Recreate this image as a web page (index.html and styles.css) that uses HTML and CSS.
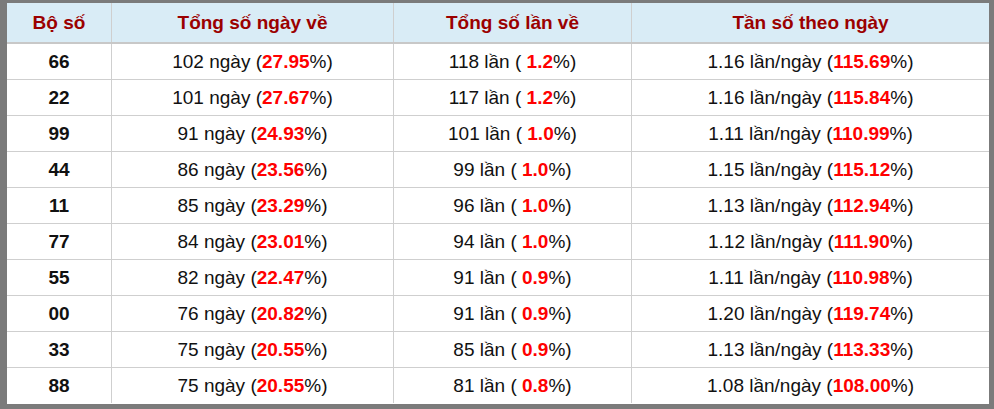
FILE: index.html
```html
<!DOCTYPE html>
<html lang="vi">
<head>
<meta charset="utf-8">
<link rel="stylesheet" href="styles.css">
</head>
<body>
<div class="frame">
<table class="stats">
<thead>
<tr><th class="c1">Bộ số</th><th class="c2">Tổng số ngày về</th><th class="c3">Tổng số lần về</th><th class="c4">Tần số theo ngày</th></tr>
</thead>
<tbody>
<tr><td class="num">66</td><td>102 ngày (<b>27.95</b>%)</td><td>118 lần ( <b>1.2</b>%)</td><td>1.16 lần/ngày (<b>115.69</b>%)</td></tr>
<tr><td class="num">22</td><td>101 ngày (<b>27.67</b>%)</td><td>117 lần ( <b>1.2</b>%)</td><td>1.16 lần/ngày (<b>115.84</b>%)</td></tr>
<tr><td class="num">99</td><td>91 ngày (<b>24.93</b>%)</td><td>101 lần ( <b>1.0</b>%)</td><td>1.11 lần/ngày (<b>110.99</b>%)</td></tr>
<tr><td class="num">44</td><td>86 ngày (<b>23.56</b>%)</td><td>99 lần ( <b>1.0</b>%)</td><td>1.15 lần/ngày (<b>115.12</b>%)</td></tr>
<tr><td class="num">11</td><td>85 ngày (<b>23.29</b>%)</td><td>96 lần ( <b>1.0</b>%)</td><td>1.13 lần/ngày (<b>112.94</b>%)</td></tr>
<tr><td class="num">77</td><td>84 ngày (<b>23.01</b>%)</td><td>94 lần ( <b>1.0</b>%)</td><td>1.12 lần/ngày (<b>111.90</b>%)</td></tr>
<tr><td class="num">55</td><td>82 ngày (<b>22.47</b>%)</td><td>91 lần ( <b>0.9</b>%)</td><td>1.11 lần/ngày (<b>110.98</b>%)</td></tr>
<tr><td class="num">00</td><td>76 ngày (<b>20.82</b>%)</td><td>91 lần ( <b>0.9</b>%)</td><td>1.20 lần/ngày (<b>119.74</b>%)</td></tr>
<tr><td class="num">33</td><td>75 ngày (<b>20.55</b>%)</td><td>85 lần ( <b>0.9</b>%)</td><td>1.13 lần/ngày (<b>113.33</b>%)</td></tr>
<tr><td class="num">88</td><td>75 ngày (<b>20.55</b>%)</td><td>81 lần ( <b>0.8</b>%)</td><td>1.08 lần/ngày (<b>108.00</b>%)</td></tr>
</tbody>
</table>
</div>
</body>
</html>
```

FILE: styles.css
```css
html, body {
  margin: 0;
  padding: 0;
  background: #fff;
}
.frame {
  width: 994px;
  height: 409px;
  box-sizing: border-box;
  border-style: solid;
  border-color: #7b7b7b;
  border-width: 3px 5px 5px 7px;
  overflow: hidden;
}
.stats {
  width: 982px;
  border-collapse: collapse;
  table-layout: fixed;
  font-family: "Liberation Sans", Arial, sans-serif;
  font-size: 19px;
  color: #111;
}
.stats th, .stats td {
  text-align: center;
  padding: 0;
  border-left: 1px solid #cfcfcf;
}
.stats th:first-child, .stats td:first-child {
  border-left: none;
}
.stats th {
  height: 39px;
  background: #d9ecf6;
  color: #9b0000;
  font-weight: bold;
  font-size: 19px;
  border-bottom: 2px solid #c8c8c8;
}
.stats td {
  height: 35px;
  border-bottom: 1px solid #cfcfcf;
}
.stats tbody tr:last-child td {
  border-bottom: none;
}
.c1 { width: 104px; }
.c2 { width: 281px; }
.c3 { width: 237px; }
.c4 { width: auto; }
.stats td.num {
  font-weight: bold;
}
.stats td b {
  color: #ff0000;
  font-weight: bold;
}
```
